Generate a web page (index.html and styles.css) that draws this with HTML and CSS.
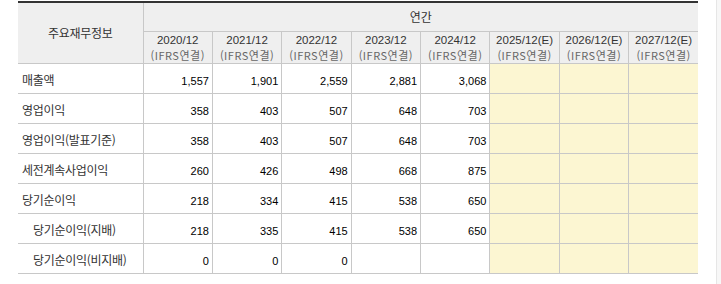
FILE: index.html
```html
<!DOCTYPE html>
<html lang="ko">
<head>
<meta charset="utf-8">
<link rel="stylesheet" href="styles.css">
</head>
<body>
<div class="page">
  <div class="main">
    <table class="fin">
      <colgroup>
        <col class="c-label">
        <col><col><col><col><col><col><col><col>
      </colgroup>
      <thead>
        <tr>
          <th class="h-label" rowspan="2">주요재무정보</th>
          <th class="h-group" colspan="8">연간</th>
        </tr>
        <tr class="h-years">
          <th><span class="yr">2020/12</span><span class="sub">(IFRS연결)</span></th>
          <th><span class="yr">2021/12</span><span class="sub">(IFRS연결)</span></th>
          <th><span class="yr">2022/12</span><span class="sub">(IFRS연결)</span></th>
          <th><span class="yr">2023/12</span><span class="sub">(IFRS연결)</span></th>
          <th><span class="yr">2024/12</span><span class="sub">(IFRS연결)</span></th>
          <th><span class="yr">2025/12(E)</span><span class="sub">(IFRS연결)</span></th>
          <th><span class="yr">2026/12(E)</span><span class="sub">(IFRS연결)</span></th>
          <th><span class="yr">2027/12(E)</span><span class="sub">(IFRS연결)</span></th>
        </tr>
      </thead>
      <tbody>
        <tr>
          <th class="lbl">매출액</th>
          <td>1,557</td><td>1,901</td><td>2,559</td><td>2,881</td><td>3,068</td>
          <td class="est"></td><td class="est"></td><td class="est"></td>
        </tr>
        <tr>
          <th class="lbl">영업이익</th>
          <td>358</td><td>403</td><td>507</td><td>648</td><td>703</td>
          <td class="est"></td><td class="est"></td><td class="est"></td>
        </tr>
        <tr>
          <th class="lbl">영업이익(발표기준)</th>
          <td>358</td><td>403</td><td>507</td><td>648</td><td>703</td>
          <td class="est"></td><td class="est"></td><td class="est"></td>
        </tr>
        <tr>
          <th class="lbl">세전계속사업이익</th>
          <td>260</td><td>426</td><td>498</td><td>668</td><td>875</td>
          <td class="est"></td><td class="est"></td><td class="est"></td>
        </tr>
        <tr>
          <th class="lbl">당기순이익</th>
          <td>218</td><td>334</td><td>415</td><td>538</td><td>650</td>
          <td class="est"></td><td class="est"></td><td class="est"></td>
        </tr>
        <tr>
          <th class="lbl indent">당기순이익(지배)</th>
          <td>218</td><td>335</td><td>415</td><td>538</td><td>650</td>
          <td class="est"></td><td class="est"></td><td class="est"></td>
        </tr>
        <tr>
          <th class="lbl indent">당기순이익(비지배)</th>
          <td>0</td><td>0</td><td>0</td><td></td><td></td>
          <td class="est"></td><td class="est"></td><td class="est"></td>
        </tr>
      </tbody>
    </table>
  </div>
  <div class="scroll"></div>
</div>
</body>
</html>
```
FILE: styles.css
```css
html, body {
  margin: 0;
  padding: 0;
  background: #fff;
}
.page {
  display: flex;
  width: 721px;
  height: 284px;
  overflow: hidden;
}
.main {
  flex: 0 0 716px;
  padding: 1px 0 0 18px;
  box-sizing: border-box;
}
.scroll {
  flex: 1;
  border-left: 1px solid #e6e6e6;
  background: #f7f7f7;
}
.fin {
  width: 680px;
  table-layout: fixed;
  border-collapse: collapse;
  border-top: 2px solid #333;
  border-bottom: 1px solid #c8c8c8;
  font-family: "Noto Sans CJK KR", "Noto Sans", sans-serif;
  font-size: 12px;
  color: #333;
}
.c-label {
  width: 125px;
}
.fin th, .fin td {
  border: 1px solid #c8c8c8;
  padding: 0;
  font-weight: normal;
}
.fin tr > :first-child {
  border-left: none;
}
.fin tr > :last-child {
  border-right: none;
}
.h-years > :first-child {
  border-left: 1px solid #c8c8c8;
}
.fin thead th {
  background: #efefef;
  text-align: center;
  vertical-align: middle;
}
.h-label {
  letter-spacing: -0.3px;
  padding-top: 1px;
}
.h-group {
  height: 29px;
  padding-top: 3px;
  box-sizing: border-box;
  border-top: none;
}
.h-years th {
  height: 32px;
  padding-top: 2px;
  box-sizing: border-box;
  white-space: nowrap;
  overflow: hidden;
}
.yr {
  display: block;
  color: #333;
  font-family: "Liberation Sans", Arial, sans-serif;
  font-size: 11.5px;
  line-height: 13px;
  letter-spacing: 0;
}
.sub {
  display: block;
  color: #666;
  font-size: 11px;
  line-height: 16px;
  letter-spacing: 0.5px;
}
.fin tbody th.lbl {
  text-align: left;
  padding-left: 4px;
  padding-top: 2px;
  background: #fff;
  height: 30px;
  box-sizing: border-box;
  letter-spacing: -0.3px;
  white-space: nowrap;
}
.fin tbody th.indent {
  padding-left: 15px;
}
.fin tbody td {
  text-align: right;
  padding-right: 3px;
  padding-top: 6px;
  height: 30px;
  box-sizing: border-box;
  font-family: "Liberation Sans", Arial, sans-serif;
  font-size: 11px;
  color: #000;
}
.fin tbody td.est {
  background: #fcf6d2;
}
```
